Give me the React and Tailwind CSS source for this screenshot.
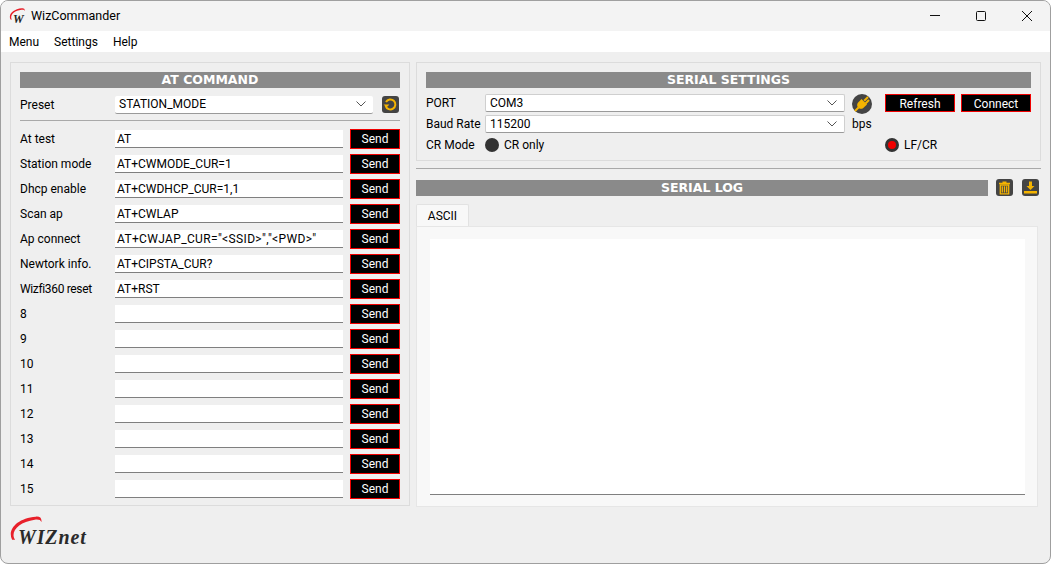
import React from "react";

const commands = [
  ["At test", "AT"],
  ["Station mode", "AT+CWMODE_CUR=1"],
  ["Dhcp enable", "AT+CWDHCP_CUR=1,1"],
  ["Scan ap", "AT+CWLAP"],
  ["Ap connect", 'AT+CWJAP_CUR="<SSID>","<PWD>"', "", "tracking-[0.35px]"],
  ["Newtork info.", "AT+CIPSTA_CUR?"],
  ["Wizfi360 reset", "AT+RST", "tracking-[-0.35px]"],
  ["8", ""],
  ["9", ""],
  ["10", ""],
  ["11", ""],
  ["12", ""],
  ["13", ""],
  ["14", ""],
  ["15", ""],
];

const Chevron = () => (
  <svg width="10" height="6" viewBox="0 0 10 6" fill="none" stroke="#555" strokeWidth="1">
    <path d="M0.5 0.5 L5 5 L9.5 0.5" />
  </svg>
);

const Combo = ({ value, className }) => (
  <div className={`flex items-center justify-between bg-white rounded-[2px] pl-1 pr-[7px] ${className}`}>
    <span>{value}</span>
    <Chevron />
  </div>
);

const SectionTitle = ({ children, className = "" }) => (
  <div className={`h-4 bg-[#8a8a8a] flex items-center justify-center pt-px text-white font-bold text-[12.5px] leading-none font-['DejaVu_Sans'] ${className}`}>
    {children}
  </div>
);

const BlackButton = ({ children, className }) => (
  <div className={`bg-black border border-[#f00000] text-white flex items-center justify-center ${className}`}>
    {children}
  </div>
);

const IconBox = ({ children }) => (
  <svg width="17" height="17" viewBox="0 0 17 17" className="shrink-0">
    <rect x="0" y="0" width="17" height="17" rx="3" fill="#444444" />
    {children}
  </svg>
);

const WizArc = ({ size }) => (
  <svg width={size} height={size * 0.72} viewBox="0 0 32 23">
    <path d="M3 23 C-2 13 8 2 26 0.6 C30 0.2 32 2 31.4 6 C31 3.6 28 3.2 25 3.6 C12 5.5 4 12 4.4 19 C4.5 21 5 22 6 23 Z" fill="#e8202a" />
  </svg>
);

export default function App() {
  return (
    <div className="w-[1051px] h-[564px] bg-white overflow-hidden font-['Roboto',sans-serif] text-[12px] text-black">
      <div className="h-full flex flex-col border border-[#9f9f9f] rounded-lg overflow-hidden bg-[#efefef]">
        {/* title bar */}
        <div className="h-[30px] shrink-0 bg-[#f3f3f3] flex items-center">
          <div className="relative w-[17px] h-[16px] ml-[8px] mr-[5px]">
            <WizArc size={16} />
            <span className="absolute left-[4px] top-[5px] font-['Liberation_Serif'] font-bold italic text-[12px] leading-none text-[#222]">W</span>
          </div>
          <span className="text-[12.5px]">WizCommander</span>
          <div className="ml-auto flex items-center">
            <svg width="46" height="30" viewBox="0 0 46 30" stroke="#111" fill="none"><path d="M18 14.5 H28" /></svg>
            <svg width="46" height="30" viewBox="0 0 46 30" stroke="#111" fill="none"><rect x="18.5" y="10.5" width="9" height="9" rx="1" /></svg>
            <svg width="46" height="30" viewBox="0 0 46 30" stroke="#111" fill="none"><path d="M18 10 L28 20 M28 10 L18 20" /></svg>
          </div>
        </div>
        {/* menu bar */}
        <div className="h-[21px] shrink-0 bg-white flex items-center gap-[15px] pl-2 text-[12px]">
          <span>Menu</span>
          <span>Settings</span>
          <span>Help</span>
        </div>

        <div className="flex-1 flex gap-[6px] pl-[9px] pt-[10px]">
          {/* left column */}
          <div className="w-[400px] shrink-0">
            <div className="h-[444px] border border-[#dcdcdc] px-[9px] pt-[9px]">
              <SectionTitle>AT COMMAND</SectionTitle>
              <div className="flex items-center mt-2 h-[17px]">
                <span className="w-[95px]">Preset</span>
                <Combo value="STATION_MODE" className="w-[258px] h-[18px] border-b border-[#9a9a9a]" />
                <div className="ml-[9px]">
                  <IconBox>
                    <path d="M4 6 A5 5 0 1 1 3.6 10" fill="none" stroke="#f5b400" strokeWidth="2" />
                    <path d="M1.6 8.4 H7.4 L4.5 11.6 Z" fill="#f5b400" />
                  </IconBox>
                </div>
              </div>
              <div className="h-px bg-[#a9a9a9] mt-[7px] mb-2"></div>
              <div className="flex flex-col gap-[5px]">
                {commands.map(([label, value, labelClass = "", valueClass = ""]) => (
                  <div key={label} className="flex items-center h-5">
                    <span className={`w-[95px] ${labelClass}`}>{label}</span>
                    <div className={`w-[228px] h-[18px] bg-white border-b border-[#7f7f7f] pl-[2px] pt-px flex items-center ${valueClass}`}>{value}</div>
                    <BlackButton className="w-[50px] h-5 ml-[7px]">Send</BlackButton>
                  </div>
                ))}
              </div>
            </div>
            {/* logo */}
            <div className="relative mt-[10px] -ml-px h-[32px] w-[80px]">
              <WizArc size={33} />
              <span className="absolute left-[9px] top-[11px] font-['Liberation_Serif'] font-bold italic text-[20px] leading-none text-[#2a2a2a] tracking-[0.9px]">WIZnet</span>
            </div>
          </div>

          {/* right column */}
          <div className="w-[625px] shrink-0">
            <div className="h-[99px] border border-[#dcdcdc] px-[9px] pt-[9px]">
              <SectionTitle>SERIAL SETTINGS</SectionTitle>
              <div className="flex mt-[6px]">
                <div className="w-[59px] shrink-0 flex flex-col">
                  <span className="h-[18px] flex items-center">PORT</span>
                  <span className="h-[18px] mt-[3px] flex items-center">Baud Rate</span>
                  <span className="h-[18px] mt-[3px] flex items-center">CR Mode</span>
                </div>
                <div className="w-[360px] shrink-0 flex flex-col">
                  <Combo value="COM3" className="h-[18px] border border-[#cfcfcf] border-b-[#9a9a9a]" />
                  <Combo value="115200" className="h-[18px] mt-[3px] border border-[#cfcfcf] border-b-[#9a9a9a]" />
                  <div className="flex items-center h-[18px] mt-[3px] gap-[5px]">
                    <span className="w-[14px] h-[14px] rounded-full bg-[#333333]"></span>
                    <span>CR only</span>
                  </div>
                </div>
                <div className="w-[33px] ml-[7px] shrink-0 flex flex-col">
                  <svg width="20" height="20" viewBox="0 0 20 20">
                    <circle cx="10" cy="10" r="10" fill="#444444" />
                    <path d="M16 3 L12.2 6.8 M17 6 L13.5 9.5" stroke="#f5b400" strokeWidth="2" />
                    <path d="M9.5 5 L15 10.5 L11 14.3 C9 15.3 7.3 14.7 6.2 13.7 C5.2 12.6 4.7 11 5.7 9 Z" fill="#f5b400" />
                    <path d="M6.5 13.5 L3 17" stroke="#f5b400" strokeWidth="2" />
                  </svg>
                  <span className="mt-[1px] h-[18px] flex items-center">bps</span>
                </div>
                <div className="flex-1 flex flex-col">
                  <div className="flex gap-[6px]">
                    <BlackButton className="w-[70px] h-[18px] pt-px">Refresh</BlackButton>
                    <BlackButton className="w-[70px] h-[18px] pt-px">Connect</BlackButton>
                  </div>
                  <div className="flex items-center h-[18px] mt-[24px] gap-[5px]">
                    <span className="w-[14px] h-[14px] rounded-full bg-[#f00000] border-[3px] border-[#333333]"></span>
                    <span>LF/CR</span>
                  </div>
                </div>
              </div>
            </div>

            <div className="h-px bg-[#a9a9a9] mt-[7px]"></div>

            <div className="flex items-center mt-[10px]">
              <SectionTitle className="w-[572px]">SERIAL LOG</SectionTitle>
              <div className="ml-2">
                <IconBox>
                  <path d="M6.5 2.5 H10.5 V3.7 H14 V5.2 H3 V3.7 H6.5 Z" fill="#f5b400" />
                  <path d="M4.3 6 H12.7 V14.8 H4.3 Z M6.3 7.3 V13.5 M8.5 7.3 V13.5 M10.7 7.3 V13.5" fill="none" stroke="#f5b400" strokeWidth="1.3" />
                </IconBox>
              </div>
              <div className="ml-[9px]">
                <IconBox>
                  <path d="M7 2.5 H10 V7 H12.5 L8.5 11 L4.5 7 H7 Z" fill="#f5b400" />
                  <path d="M2 12 H15 V14.5 H2 Z" fill="#f5b400" />
                </IconBox>
              </div>
            </div>

            <div className="mt-2 w-[622px]">
              <div className="w-[53px] h-[22px] bg-[#f8f8f8] border border-b-0 border-[#e2e2e2] rounded-t-[2px] flex items-center justify-center">ASCII</div>
              <div className="h-[281px] bg-[#f8f8f8] border border-[#e6e6e6] px-[13px] pt-3">
                <div className="w-[595px] h-[256px] bg-white border-b border-[#7f7f7f]"></div>
              </div>
            </div>
          </div>
        </div>
      </div>
    </div>
  );
}
